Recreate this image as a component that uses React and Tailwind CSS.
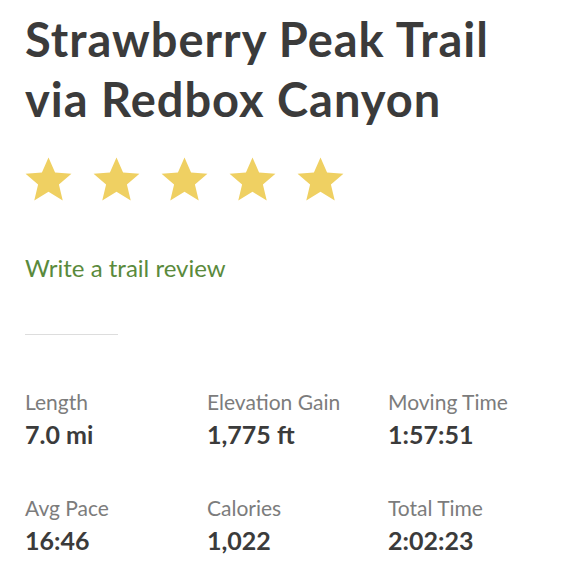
import React from 'react';

const Star = () => (
  <svg width="51" height="51" viewBox="0 0 24 24" className="block">
    <path
      d="M12 1.6l3.1 7.1 7.7.6-5.9 5 1.8 7.6L12 17.8l-6.7 4.1 1.8-7.6-5.9-5 7.7-.6z"
      fill="#efd062"
    />
  </svg>
);

const stats = [
  { label: 'Length', value: '7.0 mi' },
  { label: 'Elevation Gain', value: '1,775 ft' },
  { label: 'Moving Time', value: '1:57:51' },
  { label: 'Avg Pace', value: '16:46' },
  { label: 'Calories', value: '1,022' },
  { label: 'Total Time', value: '2:02:23' },
];

const App = () => {
  return (
    <div className="min-h-screen bg-white pl-[25px] pr-4 pt-[9px] font-['Lato',sans-serif]">
      <h1 className="text-[47px] leading-[60px] font-bold text-[#3b3b3b] tracking-[1px]">
        Strawberry Peak Trail
        <br />
        via Redbox Canyon
      </h1>

      <div className="flex gap-[17px] mt-[25px] -ml-[2px]">
        {[0, 1, 2, 3, 4].map((i) => (
          <Star key={i} />
        ))}
      </div>

      <div className="mt-[49px] text-[24px] leading-[28px] text-[#5a8a3c]">
        Write a trail review
      </div>

      <div className="mt-[52px] w-[93px] h-[1px] bg-[#dddddd]" />

      <div className="grid grid-cols-[182px_181px_1fr] gap-y-[47px] mt-[55px]">
        {stats.map((s) => (
          <div key={s.label}>
            <div className="text-[21px] leading-[24px] text-[#7c7c7c]">{s.label}</div>
            <div className="text-[25px] leading-[30px] font-bold text-[#3b3b3b] mt-[5px]">{s.value}</div>
          </div>
        ))}
      </div>
    </div>
  );
};

export default App;
